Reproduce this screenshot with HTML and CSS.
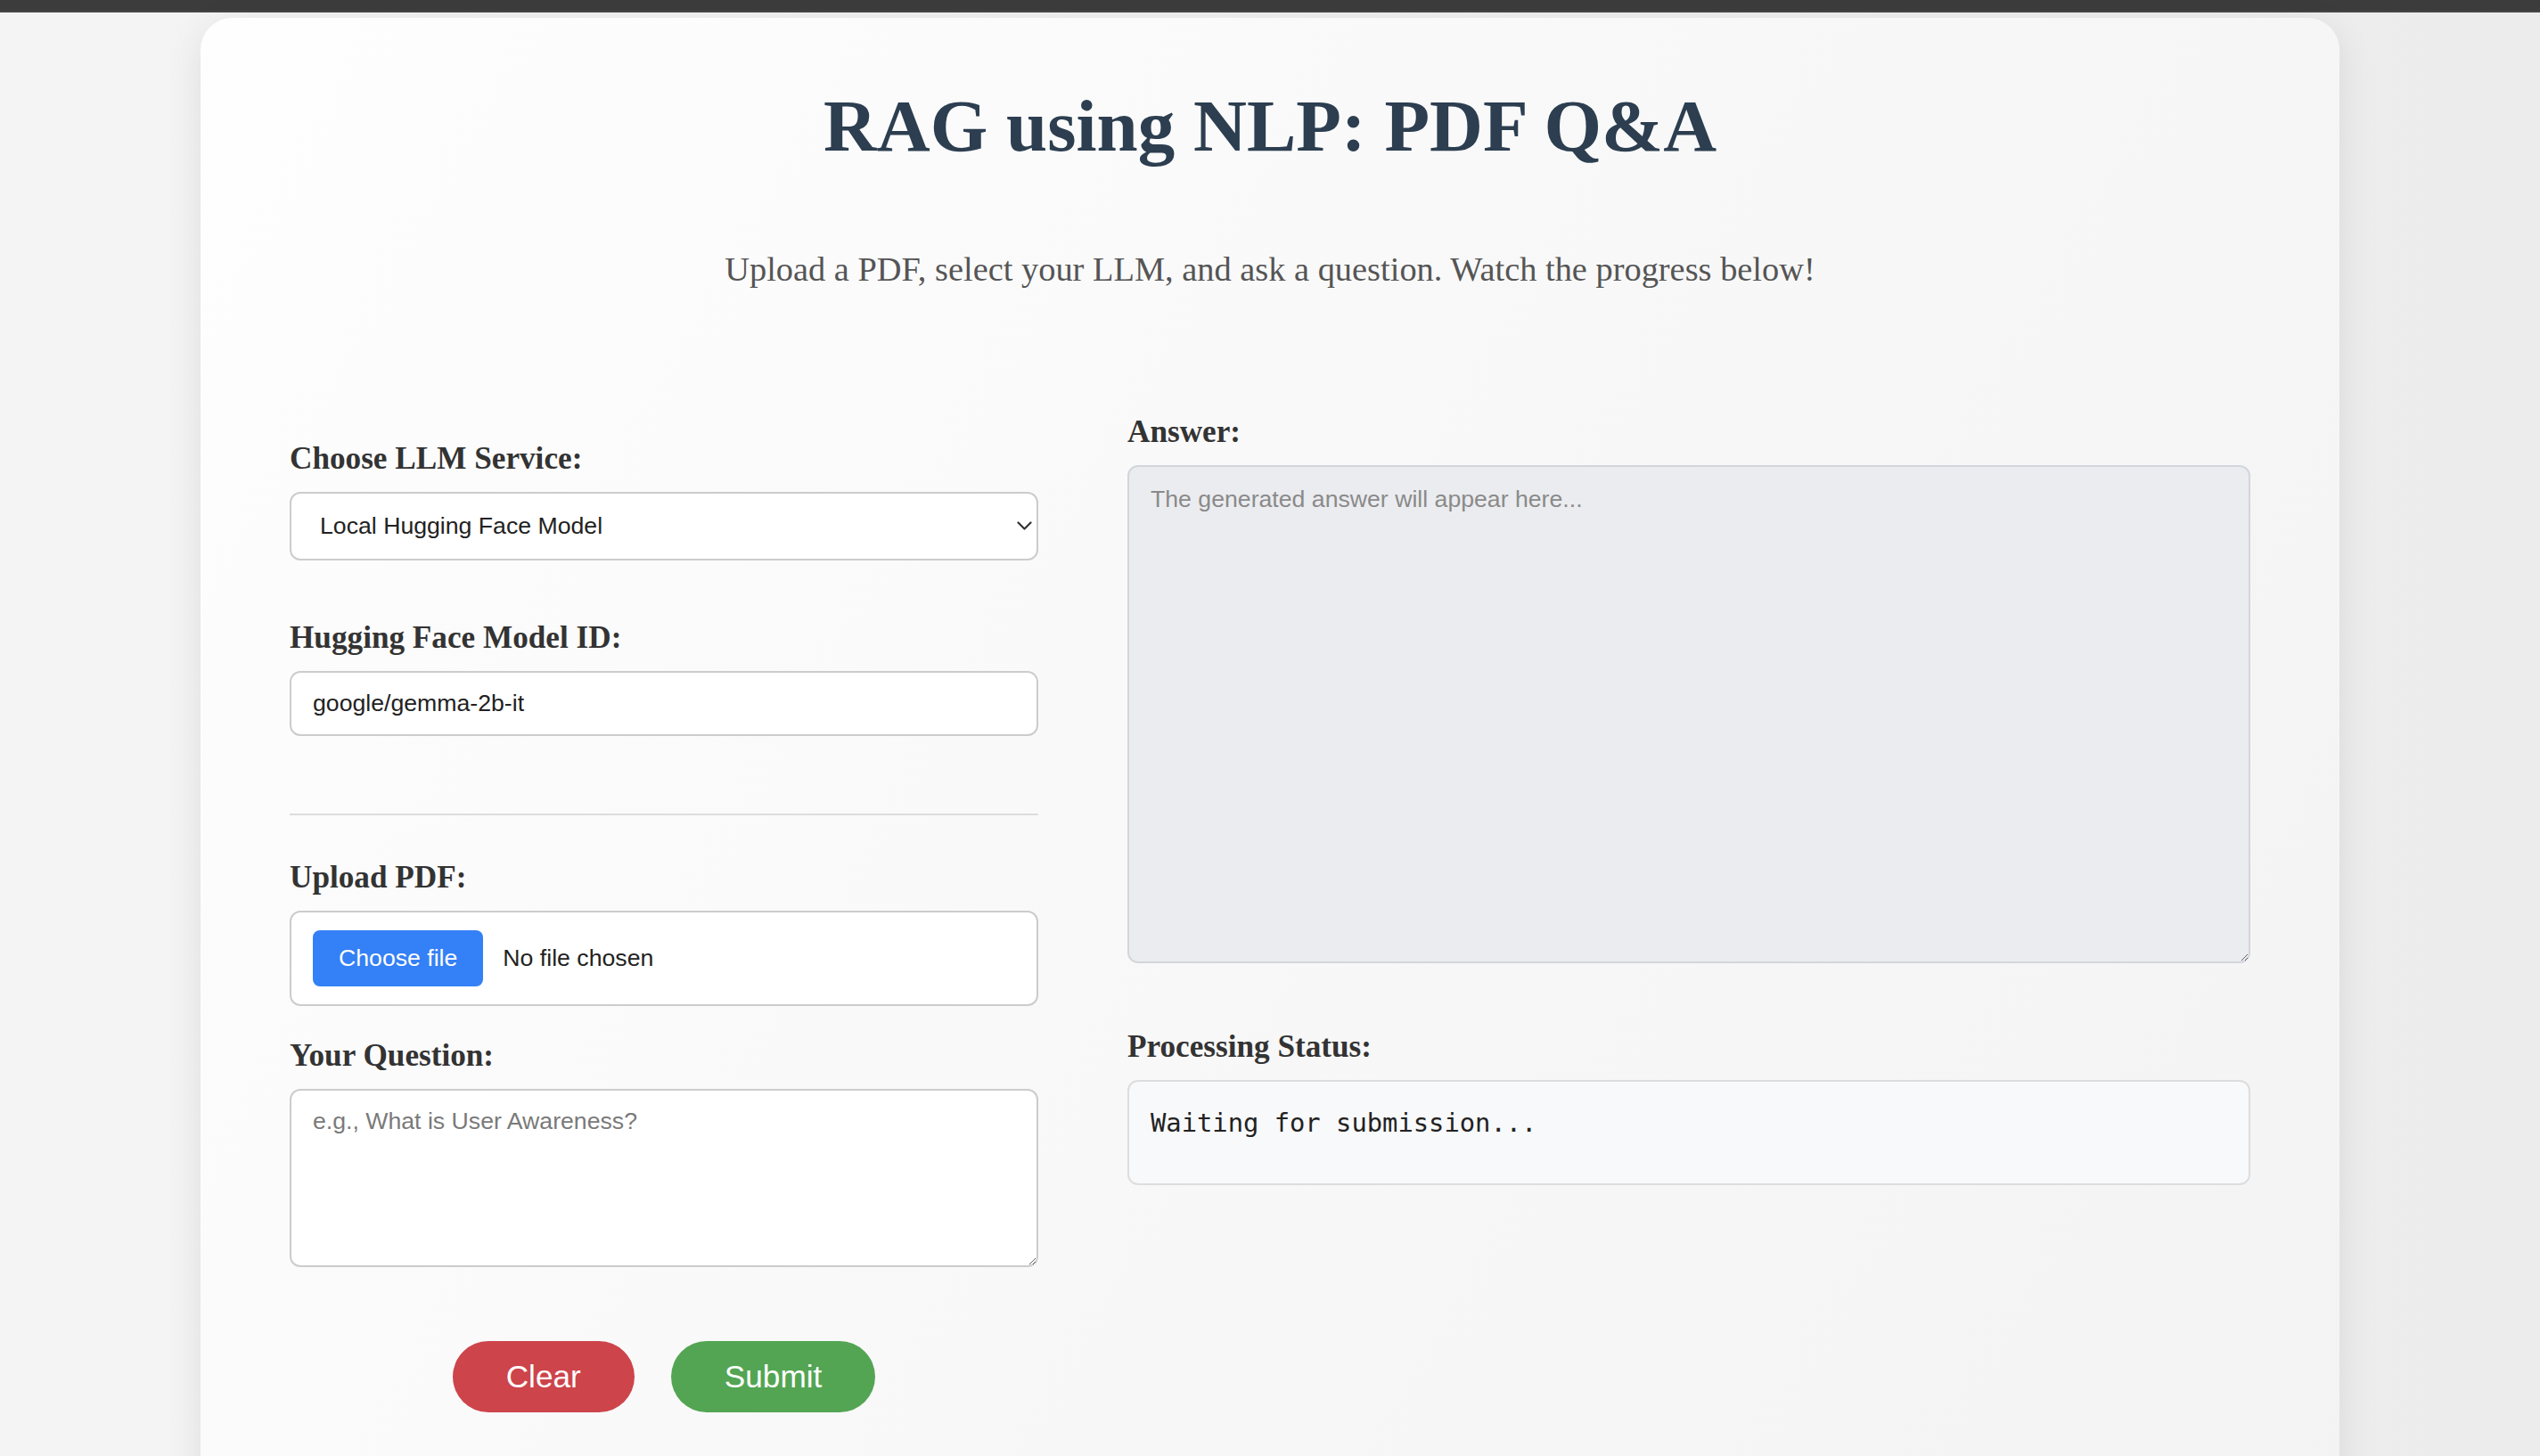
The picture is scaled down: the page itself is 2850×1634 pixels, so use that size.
FILE: index.html
```html
<!DOCTYPE html>
<html lang="en">
<head>
<meta charset="utf-8">
<title>RAG using NLP: PDF Q&amp;A</title>
<link rel="stylesheet" href="styles.css">
</head>
<body>
<div class="topbar"></div>
<main class="card">
  <h1 class="title">RAG using NLP: PDF Q&amp;A</h1>
  <p class="subtitle">Upload a PDF, select your LLM, and ask a question. Watch the progress below!</p>

  <div class="grid">
    <section class="col col-left">
      <div class="field field-service">
        <label class="label" for="llm">Choose LLM Service:</label>
        <div class="select-wrap">
          <select id="llm" class="control select">
            <option>Local Hugging Face Model</option>
          </select>
          <svg class="chevron" width="17" height="10" viewBox="0 0 17 10" aria-hidden="true">
            <path d="M1.5 1.5 L8.5 8.5 L15.5 1.5" fill="none" stroke="#333" stroke-width="2.2" stroke-linecap="round" stroke-linejoin="round"/>
          </svg>
        </div>
      </div>

      <div class="field field-model">
        <label class="label" for="model">Hugging Face Model ID:</label>
        <input id="model" class="control input" type="text" value="google/gemma-2b-it">
      </div>

      <hr class="divider">

      <div class="field field-upload">
        <span class="label">Upload PDF:</span>
        <div class="file-box">
          <span class="file-btn">Choose file</span>
          <span class="file-name">No file chosen</span>
        </div>
      </div>

      <div class="field field-question">
        <label class="label" for="question">Your Question:</label>
        <textarea id="question" class="control textarea question" placeholder="e.g., What is User Awareness?"></textarea>
      </div>

      <div class="actions">
        <button class="btn btn-clear" type="button">Clear</button>
        <button class="btn btn-submit" type="button">Submit</button>
      </div>
    </section>

    <section class="col col-right">
      <div class="field field-answer">
        <label class="label" for="answer">Answer:</label>
        <textarea id="answer" class="control textarea answer" readonly placeholder="The generated answer will appear here..."></textarea>
      </div>

      <div class="field field-status">
        <span class="label">Processing Status:</span>
        <div class="status">Waiting for submission...</div>
      </div>
    </section>
  </div>
</main>
</body>
</html>
```

FILE: styles.css
```css
* {
  box-sizing: border-box;
}

html, body {
  margin: 0;
  padding: 0;
}

body {
  background: linear-gradient(to right, #f4f4f4, #ececec);
  font-family: "Liberation Serif", "Times New Roman", serif;
  min-height: 1634px;
}

.topbar {
  height: 14px;
  background: #3c3c3c;
  border-bottom: 2px solid #464646;
}

.card {
  width: 2400px;
  margin: 6px auto 0;
  padding: 73px 100px 200px;
  border-radius: 36px;
  background: linear-gradient(120deg, #fefefe 0%, #f7f7f7 60%, #f3f3f3 100%);
  box-shadow: 0 10px 40px rgba(0, 0, 0, 0.09);
}

.title {
  margin: 0;
  text-align: center;
  font-family: "Liberation Serif", "Times New Roman", serif;
  font-weight: 700;
  font-size: 83px;
  line-height: 96px;
  color: #2c3e50;
}

.subtitle {
  margin: 91px 0 0;
  text-align: center;
  font-size: 38.4px;
  line-height: 44px;
  color: #555555;
}

.grid {
  display: grid;
  grid-template-columns: 2fr 3fr;
  column-gap: 100px;
  margin-top: 141px;
  align-items: start;
}

.col {
  display: flex;
  flex-direction: column;
}

.col-left {
  padding-top: 30px;
}

.label {
  display: block;
  font-family: "Liberation Serif", "Times New Roman", serif;
  font-weight: 700;
  font-size: 35.2px;
  line-height: 40px;
  color: #333333;
  margin-bottom: 17px;
}

.field-model {
  margin-top: 67px;
}

.field-question {
  margin-top: 36px;
}

.field-status {
  margin-top: 74px;
}

.control {
  display: block;
  width: 100%;
  font-family: "Liberation Sans", Arial, sans-serif;
  font-size: 26.67px;
  color: #222222;
  background: #ffffff;
  border: 2px solid #cccccc;
  border-radius: 12px;
  outline: none;
}

.select-wrap {
  position: relative;
}

.select {
  appearance: none;
  -webkit-appearance: none;
  height: 77px;
  padding: 0 40px 0 32px;
  line-height: 73px;
}

.chevron {
  position: absolute;
  right: 7px;
  top: 33px;
  pointer-events: none;
}

.input {
  height: 73px;
  padding: 0 24px;
}

.divider {
  margin: 87px 0 50px;
  border: 0;
  height: 2px;
  background: #dddddd;
}

.file-box {
  display: flex;
  align-items: center;
  gap: 22px;
  height: 107px;
  padding: 0 24px;
  background: #ffffff;
  border: 2px solid #cccccc;
  border-radius: 12px;
  font-family: "Liberation Sans", Arial, sans-serif;
  font-size: 26.67px;
}

.file-btn {
  display: inline-block;
  padding: 16px 29px;
  line-height: 31px;
  background: #3480f6;
  color: #ffffff;
  border-radius: 8px;
}

.file-name {
  color: #222222;
}

.textarea {
  resize: vertical;
  line-height: 31px;
  padding: 19px 24px;
}

.question {
  height: 200px;
}

.question::placeholder {
  color: #7a7a7a;
}

.answer {
  height: 559px;
  background: #ebecef;
  border-color: #d2d6dc;
  padding: 21px 24px;
}

.answer::placeholder {
  color: #8a8a8a;
}

.status {
  min-height: 118px;
  padding: 29px 24px;
  background: #f8f9fa;
  border: 2px solid #dddddd;
  border-radius: 12px;
  font-family: "DejaVu Sans Mono", "Liberation Mono", monospace;
  font-size: 28.8px;
  line-height: 34px;
  color: #222222;
  white-space: pre-wrap;
}

.actions {
  display: flex;
  justify-content: center;
  gap: 41px;
  margin-top: 83px;
}

.btn {
  border: 0;
  border-radius: 40px;
  padding: 20px 60px;
  font-family: "Liberation Sans", Arial, sans-serif;
  font-size: 35.2px;
  line-height: 40px;
  color: #ffffff;
  cursor: pointer;
}

.btn-clear {
  background: #cd444b;
}

.btn-submit {
  background: #53a553;
}
```
